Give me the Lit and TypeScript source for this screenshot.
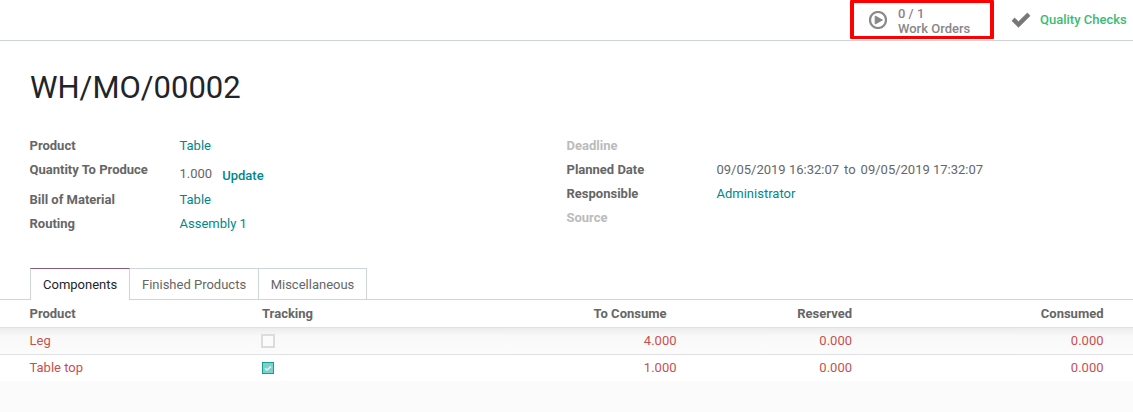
import { LitElement, html, css } from "lit";
import { customElement } from "lit/decorators.js";

@customElement("app-root")
export class AppRoot extends LitElement {
  static styles = css`
    :host { display: block; width: 1133px; height: 412px; overflow: hidden; background: #fff; font-family: Roboto, sans-serif; font-size: 13px; color: #666; line-height: 18px; }
    .top { height: 40px; border-bottom: 1px solid #ced4da; display: flex; justify-content: flex-end; box-sizing: content-box; }
    .btn { display: flex; align-items: center; box-sizing: border-box; height: 39px; }
    .wo { width: 144px; border-style: solid; border-color: #f00; border-width: 3px 4px; border-radius: 1px; padding-left: 15px; gap: 11px; margin-right: 17px; }
    .wo .t { font-size: 13px; font-weight: 500; line-height: 15px; color: #888; padding-top: 2px; }
    .wo .n { color: #9a7a92; }
    .qc { width: 122px; gap: 9px; color: #3dbb72; font-weight: 500; font-size: 13px; height: 40px; }
    .title { font-size: 31px; line-height: 36px; color: #212529; margin: 29px 0 0 30px; font-weight: 400; }
    .form { display: grid; grid-template-columns: 537px 1fr; margin: 28px 0 0 29.5px; height: 134px; }
    .col { display: flex; flex-direction: column; }
    .row { display: flex; height: 24px; align-items: flex-start; padding-top: 3px; box-sizing: border-box; }
    .row.tall { height: 30px; }
    .row.tall .val { padding-top: 4px; }
    .lab { font-weight: 700; color: #666; width: 150px; flex: none; }
    .lab.dim { color: #bbb; }
    a { color: #00878c; text-decoration: none; }
    .upd { font-weight: 500; margin-left: 10px; position: relative; top: 2px; }
    .to { margin: 0 5px; }
    .tabs { display: flex; padding-left: 30px; height: 31px; border-bottom: 1px solid #ced4da; box-sizing: content-box; }
    .tab { height: 31px; box-sizing: border-box; padding: 7px 11.75px 0; border: 1px solid #ced4da; border-left: 0; border-bottom: 0; color: #666; }
    .tab.on { border-left: 1px solid #ced4da; border-top: 1px solid #875a7b; color: #212529; height: 32px; background: #fff; padding: 7px 12px 0; }
    .grid { display: grid; grid-template-columns: 262px 200px 234px 185.5px 251.5px; }
    .grid > div { padding: 0 29.5px 0 0; }
    .head { height: 27px; box-sizing: content-box; border-bottom: 1px solid #dee2e6; font-weight: 700; line-height: 27px; }
    .r { text-align: right; }
    .first { padding-left: 29.5px !important; }
    .cons { padding-right: 19.5px !important; }
    .rowd { height: 26px; box-sizing: content-box; line-height: 26px; color: #c9504f; border-bottom: 1px solid #dee2e6; }
    .rowd.shade { background: linear-gradient(#ececec 0, #f9f9f9 8px, #fbfbfb 100%); }
    .rowd.last { border-bottom: 0; }
    .foot { height: 31px; background: #fbfbfb; }
    .box { display: flex; height: 100%; align-items: center; }
    .cb { width: 10px; height: 10px; border: 2px solid #dcdcdc; box-sizing: content-box; background: #fbfbfb; margin-left: -1px; }
    .cb.on { width: 10px; height: 10px; margin-left: 0; border: 1px solid #14a098; background: #7fcfca; display: flex; align-items: center; justify-content: center; }
  `;

  private rows = [
    ["Leg", false, "4.000", "0.000", "0.000"],
    ["Table top", true, "1.000", "0.000", "0.000"],
  ] as const;

  render() {
    return html`
      <div class="top">
        <div class="btn wo">
          <svg width="18" height="18" viewBox="0 0 18 18"><circle cx="9" cy="9" r="8" fill="none" stroke="#888" stroke-width="2.2"/><path d="M6.2 5 L13.4 9 L6.2 13 Z" fill="#888" stroke="#888" stroke-width="1" stroke-linejoin="round"/></svg>
          <div class="t"><div class="n">0 / 1</div><div>Work Orders</div></div>
        </div>
        <div class="btn qc">
          <svg width="20" height="16" viewBox="0 0 20 16"><path d="M1 8.8 L3.6 6 L7.5 9.8 L16.4 1 L19 3.8 L7.5 15.2 Z" fill="#777" stroke="#777" stroke-width="0.8" stroke-linejoin="round"/></svg>
          <span>Quality Checks</span>
        </div>
      </div>
      <h1 class="title">WH/MO/00002</h1>
      <div class="form">
        <div class="col">
          <div class="row"><div class="lab">Product</div><a class="val">Table</a></div>
          <div class="row tall"><div class="lab">Quantity To Produce</div><div class="val">1.000<a class="upd">Update</a></div></div>
          <div class="row"><div class="lab">Bill of Material</div><a class="val">Table</a></div>
          <div class="row"><div class="lab">Routing</div><a class="val">Assembly 1</a></div>
        </div>
        <div class="col">
          <div class="row"><div class="lab dim">Deadline</div></div>
          <div class="row"><div class="lab">Planned Date</div><div class="val">09/05/2019 16:32:07<span class="to">to</span>09/05/2019 17:32:07</div></div>
          <div class="row"><div class="lab">Responsible</div><a class="val">Administrator</a></div>
          <div class="row"><div class="lab dim">Source</div></div>
        </div>
      </div>
      <div class="tabs">
        <div class="tab on">Components</div>
        <div class="tab">Finished Products</div>
        <div class="tab">Miscellaneous</div>
      </div>
      <div class="grid head">
        <div class="first">Product</div><div>Tracking</div><div class="r">To Consume</div><div class="r">Reserved</div><div class="r">Consumed</div>
      </div>
      ${this.rows.map((r, i) => html`
        <div class="grid rowd ${i === 0 ? "shade" : "last"}">
          <div class="first">${r[0]}</div>
          <div><div class="box"><span class="cb ${r[1] ? "on" : ""}">${r[1] ? html`<svg width="8" height="8" viewBox="0 0 8 8"><path d="M1 4.4 L3 6 L7 2.4" fill="none" stroke="#dff3f1" stroke-width="1.5"/></svg>` : ""}</span></div></div>
          <div class="r cons">${r[2]}</div><div class="r">${r[3]}</div><div class="r">${r[4]}</div>
        </div>`)}
      <div class="foot"></div>
    `;
  }
}
